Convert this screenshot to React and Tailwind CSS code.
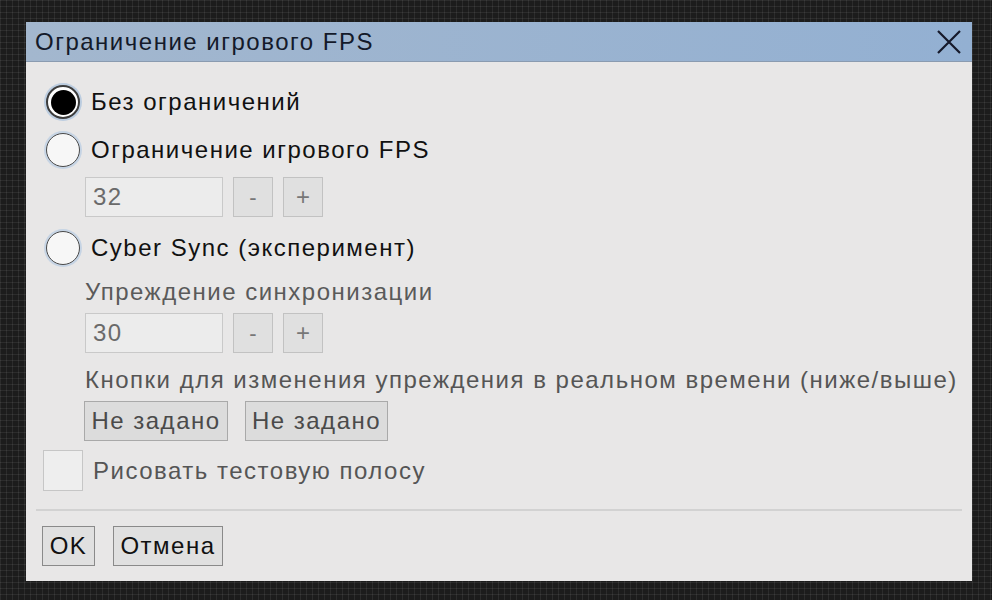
import React, { useState } from "react";

const FONT = { fontFamily: '"Liberation Sans", Arial, sans-serif' };

const Radio = ({ checked, label, onClick }) => (
  <div className="flex items-center h-[36px] cursor-pointer" onClick={onClick}>
    <div
      className={
        checked
          ? "w-[34px] h-[34px] rounded-full border-2 border-[#3c3c3c] bg-white shadow-[0_0_0_2px_#bccde0] flex items-center justify-center"
          : "w-[34px] h-[34px] rounded-full border-[1.5px] border-[#4a4a4a] bg-[#f7f7f7] shadow-[0_0_0_2px_#c6d4e4] flex items-center justify-center"
      }
    >
      {checked && <div className="w-[25px] h-[25px] rounded-full bg-black" />}
    </div>
    <span className="ml-[11px] text-[24px] leading-none text-[#111]">{label}</span>
  </div>
);

const Stepper = ({ value }) => (
  <div className="flex items-center gap-[10px] ml-[59px]">
    <div className="w-[138px] h-[40px] border border-[#c9c9c9] bg-[#ececec] flex items-center pl-[7px] text-[24px] text-[#6a6a6a]">
      {value}
    </div>
    <button className="w-[40px] h-[40px] border border-[#c2c2c2] bg-[#e0e0e0] text-[22px] text-[#777] flex items-center justify-center tracking-normal">
      -
    </button>
    <button className="w-[40px] h-[40px] border border-[#c2c2c2] bg-[#e0e0e0] text-[24px] text-[#777] flex items-center justify-center tracking-normal">
      +
    </button>
  </div>
);

export default function App() {
  const [mode, setMode] = useState(0);

  return (
    <div
      style={FONT}
      className="w-[992px] h-[600px] overflow-hidden pt-[22px] pl-[26px] tracking-[1.5px] bg-[#1c1c1c] bg-[image:linear-gradient(rgba(255,255,255,0.07)_1px,transparent_1px),linear-gradient(90deg,rgba(255,255,255,0.07)_1px,transparent_1px)] bg-[length:6px_6px]"
    >
      <div className="w-[946px] h-[559px] flex flex-col bg-[#e8e7e7]">
        {/* title bar */}
        <div className="h-[40px] flex items-center justify-between pl-[9px] pr-[11px] bg-[linear-gradient(90deg,#a3b7ce,#93b0d2)] border-b border-[#8a9bb0]">
          <span className="text-[24px] leading-none text-[#141a2a]">Ограничение игрового FPS</span>
          <svg width="24" height="24" viewBox="0 0 24 24">
            <path d="M1 1 L23 23 M23 1 L1 23" stroke="#16192a" strokeWidth="2.2" fill="none" />
          </svg>
        </div>

        {/* body */}
        <div className="flex flex-col pl-[20px] pt-[22px]">
          <Radio checked={mode === 0} label="Без ограничений" onClick={() => setMode(0)} />
          <div className="mt-[12px]">
            <Radio checked={mode === 1} label="Ограничение игрового FPS" onClick={() => setMode(1)} />
          </div>
          <div className="mt-[9px] -ml-[20px]">
            <Stepper value="32" />
          </div>
          <div className="mt-[13px]">
            <Radio checked={mode === 2} label="Cyber Sync (эксперимент)" onClick={() => setMode(2)} />
          </div>
          <div className="mt-[11px] ml-[39px] h-[30px] flex items-center text-[24px] text-[#5a5a5a]">
            Упреждение синхронизации
          </div>
          <div className="mt-[6px] -ml-[20px]">
            <Stepper value="30" />
          </div>
          <div className="mt-[12px] ml-[39px] h-[30px] flex items-center text-[24px] text-[#555] whitespace-nowrap">
            Кнопки для изменения упреждения в реальном времени (ниже/выше)
          </div>
          <div className="mt-[6px] ml-[38px] flex gap-[17px]">
            <button className="w-[144px] h-[40px] border border-[#a9a9a9] bg-[#dcdcdc] text-[24px] text-[#4a4a4a]">
              Не задано
            </button>
            <button className="w-[143px] h-[40px] border border-[#a9a9a9] bg-[#dcdcdc] text-[24px] text-[#4a4a4a]">
              Не задано
            </button>
          </div>
          <div className="mt-[9px] -ml-[3px] flex items-center">
            <div className="w-[40px] h-[41px] border border-[#c6c6c6] bg-[#eeeeee]" />
            <span className="ml-[10px] text-[24px] text-[#555]">Рисовать тестовую полосу</span>
          </div>
        </div>

        <div className="mt-[18px] mx-[10px] h-[2px] bg-[#d2d2d2]" />

        {/* footer */}
        <div className="mt-[15px] pl-[16px] flex gap-[18px]">
          <button className="w-[53px] h-[40px] border border-[#8a8a8a] bg-[#e0e0e0] text-[24px] text-[#111]">
            OK
          </button>
          <button className="w-[110px] h-[40px] border border-[#8a8a8a] bg-[#e0e0e0] text-[24px] text-[#111]">
            Отмена
          </button>
        </div>
      </div>
    </div>
  );
}
